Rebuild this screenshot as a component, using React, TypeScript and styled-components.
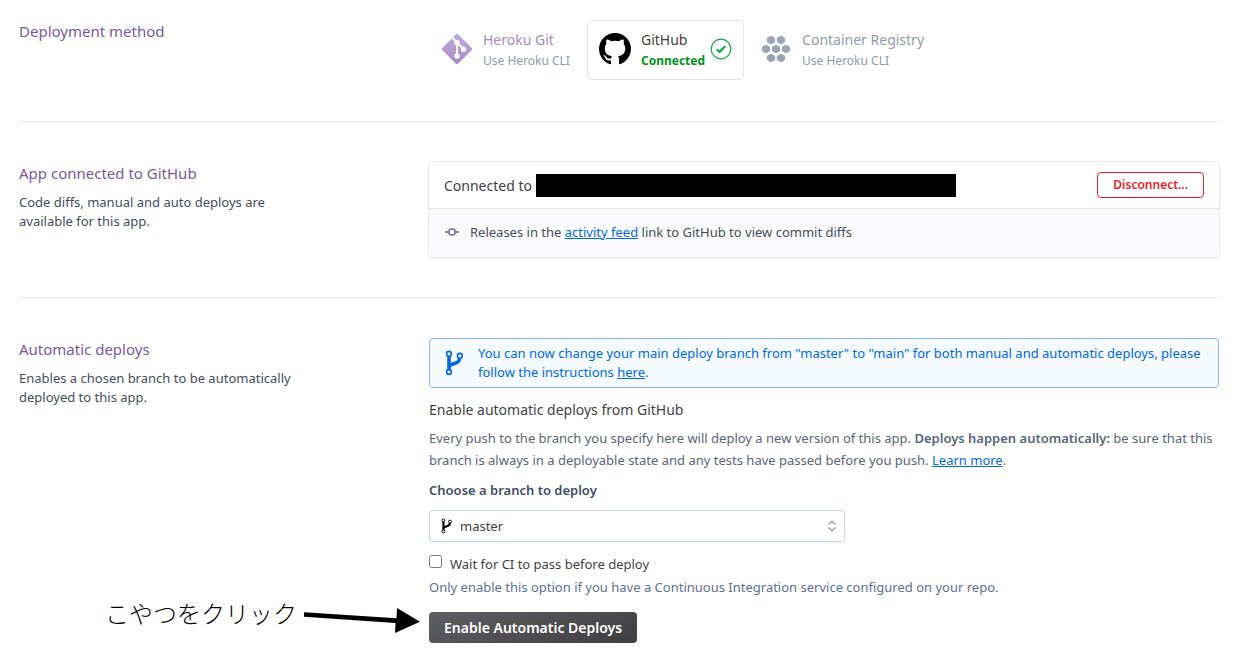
import React from "react";
import styled, { createGlobalStyle, css } from "styled-components";

const GlobalStyle = createGlobalStyle`
  *, *::before, *::after { box-sizing: border-box; }
  body {
    margin: 0;
    background: #fff;
    color: #3f3f44;
    font-family: "Noto Sans", "Noto Sans CJK JP", sans-serif;
    font-size: 13px;
    line-height: 19px;
  }
  h2, h3, p { margin: 0; font-weight: 400; }
  strong { font-weight: 600; }
  svg { flex: none; }
  button, select, input { font: inherit; margin: 0; }
`;

const Page = styled.main`
  padding: 0 15px 0 19px;
`;

const Section = styled.section<{ $first?: boolean; $last?: boolean }>`
  display: grid;
  grid-template-columns: 280px minmax(0, 1fr);
  column-gap: 130px;
  padding: ${(p) => (p.$first ? "20px" : "40px")} 0 ${(p) => (p.$first ? "41px" : p.$last ? "20px" : "40px")};
  border-bottom: ${(p) => (p.$last ? "0" : "1px solid #e3e4e9")};
`;

const SectionTitle = styled.h2`
  color: #79589f;
  font-size: 15px;
  line-height: 22px;
`;

const SectionText = styled.p`
  margin-top: 9px;
  color: #3f4d63;
`;

const Methods = styled.div`
  display: flex;
`;

const Method = styled.a<{ $active?: boolean }>`
  display: flex;
  align-items: center;
  height: 60px;
  padding: 0 11px 2px;
  border: 1px solid ${(p) => (p.$active ? "#e3e4e9" : "transparent")};
  border-radius: 4px;
  text-decoration: none;
`;

const MethodLabel = styled.span`
  display: flex;
  flex-direction: column;
  margin: 2px 5px 0 10px;
`;

const MethodName = styled.span<{ $color: string }>`
  color: ${(p) => p.$color};
  font-size: 14px;
  line-height: 21px;
`;

const MethodNote = styled.span<{ $connected?: boolean }>`
  color: ${(p) => (p.$connected ? "#00911f" : "#8d9bb0")};
  font-size: 12px;
  font-weight: ${(p) => (p.$connected ? 700 : 400)};
  line-height: 21px;
`;

const Panel = styled.div`
  align-self: start;
  border-radius: 4px;
  box-shadow: 0 0 0 1px #e6e8ed, 0 1px 2px #e3e5ea;
  overflow: hidden;
`;

const PanelRow = styled.div`
  display: flex;
  align-items: center;
  justify-content: space-between;
  height: 46px;
  padding: 0 15px;
  font-size: 14px;
`;

const Repo = styled.span`
  display: flex;
  align-items: center;
  gap: 4px;
`;

const Redacted = styled.span`
  width: 420px;
  height: 23px;
  background: #000;
`;

const PanelFooter = styled.div`
  display: flex;
  align-items: center;
  gap: 10px;
  height: 49px;
  padding: 0 15px 2px;
  border-top: 1px solid #e0e2ee;
  background: #fbfbfd;
  color: #3f4d63;
`;

const Link = styled.a<{ $inherit?: boolean }>`
  color: ${(p) => (p.$inherit ? "inherit" : "#0069e0")};
  text-decoration: underline;
`;

const buttonBase = css`
  border-radius: 4px;
  font-weight: 600;
  cursor: pointer;
`;

const DangerButton = styled.button`
  ${buttonBase}
  height: 26px;
  padding: 0 15px;
  border: 1px solid #eb1c26;
  background: #fff;
  color: #eb1c26;
  font-size: 12px;
  line-height: 20px;
`;

const PrimaryButton = styled.button`
  ${buttonBase}
  height: 31px;
  padding: 0 15px;
  border: 0;
  background: linear-gradient(160deg, #5f5e64, #3f3e43);
  color: #fff;
  font-size: 14px;
  line-height: 20px;
`;

const Notice = styled.div`
  display: flex;
  align-items: center;
  gap: 15px;
  padding: 5px 15px;
  border: 1px solid #84b6f0;
  border-radius: 4px;
  background: #f5faff;
  color: #0069e0;
`;

const Form = styled.form`
  display: flex;
  flex-direction: column;
  align-items: flex-start;
`;

const FormTitle = styled.h3`
  margin-top: 12px;
  font-size: 14px;
  line-height: 20px;
`;

const FormText = styled.p`
  margin-top: 7px;
  color: #56657d;
  line-height: 22px;
`;

const FieldLabel = styled.label`
  margin-top: 9px;
  color: #3f4d63;
  font-weight: 600;
  line-height: 20px;
`;

const SelectBox = styled.div`
  display: grid;
  align-items: center;
  width: 416px;
  max-width: 100%;
  margin-top: 10px;

  > * { grid-area: 1 / 1; }
  > svg { pointer-events: none; margin: 0 8px 0 12px; }
  > svg:last-child { justify-self: end; }
`;

const Select = styled.select`
  width: 100%;
  height: 32px;
  padding: 0 30px;
  border: 1px solid #c9d4e6;
  border-radius: 4px;
  background: #fff;
  box-shadow: 0 1px 2px #eef1f6;
  color: #3f3f44;
  appearance: none;
`;

const CheckLabel = styled.label`
  display: flex;
  align-items: flex-start;
  gap: 8px;
  margin-top: 12px;
  line-height: 20px;

  input { width: 13px; height: 13px; margin-top: 1px; }
`;

const Hint = styled.p`
  margin-top: 3px;
  color: #5b7193;
  line-height: 20px;
`;

const Actions = styled.div`
  position: relative;
  display: flex;
  margin-top: 15px;
`;

const Callout = styled.div`
  position: absolute;
  top: -20px;
  right: 100%;
  display: flex;
  align-items: center;
  gap: 6px;
  padding-right: 9px;
  color: #000;
  font-family: "Noto Sans CJK JP", sans-serif;
  font-size: 24px;
  font-weight: 300;
  line-height: 32px;
  white-space: nowrap;
`;

const GitLogo = () => (
  <svg width="32" height="32" viewBox="0 0 32 32" aria-hidden="true">
    <defs>
      <linearGradient id="git" x1="0" y1="0" x2="1" y2="1">
        <stop offset="0" stopColor="#c3a8dc" />
        <stop offset="1" stopColor="#a98cc4" />
      </linearGradient>
    </defs>
    <rect x="4.8" y="4.8" width="22.4" height="22.4" rx="1.5" transform="rotate(45 16 16)" fill="url(#git)" />
    <g stroke="#fff" strokeWidth="2" fill="none">
      <path d="M10 3.5 16 9.5V23M16 9.5l6.5 6.5" />
    </g>
    <g fill="#fff">
      <circle cx="16" cy="9.8" r="2.7" />
      <circle cx="22.5" cy="16.2" r="2.7" />
      <circle cx="16" cy="23" r="2.7" />
    </g>
  </svg>
);

const GitHubLogo = () => (
  <svg width="32" height="32" viewBox="0 0 16 16" aria-hidden="true">
    <path
      fill="#000"
      d="M8 0C3.58 0 0 3.58 0 8c0 3.54 2.29 6.53 5.47 7.59.4.07.55-.17.55-.38 0-.19-.01-.82-.01-1.49-2.01.37-2.53-.49-2.69-.94-.09-.23-.48-.94-.82-1.13-.28-.15-.68-.52-.01-.53.63-.01 1.08.58 1.23.82.72 1.21 1.87.87 2.33.66.07-.52.28-.87.51-1.07-1.78-.2-3.64-.89-3.64-3.95 0-.87.31-1.59.82-2.15-.08-.2-.36-1.02.08-2.12 0 0 .67-.21 2.2.82.64-.18 1.32-.27 2-.27.68 0 1.36.09 2 .27 1.53-1.04 2.2-.82 2.2-.82.44 1.1.16 1.92.08 2.12.51.56.82 1.27.82 2.15 0 3.07-1.87 3.75-3.65 3.95.29.25.54.73.54 1.48 0 1.07-.01 1.93-.01 2.2 0 .21.15.46.55.38A8.013 8.013 0 0 0 16 8c0-4.42-3.58-8-8-8z"
    />
  </svg>
);

const CheckCircle = () => (
  <svg width="22" height="22" viewBox="0 0 22 22" fill="none" stroke="#00a83c" aria-hidden="true">
    <circle cx="11" cy="11" r="9.8" strokeWidth="1.2" />
    <path d="M6.8 11.3 9.6 14l5.6-5.8" strokeWidth="2" />
  </svg>
);

const hexagons = [[10, 5], [20, 5], [5, 14], [15, 14], [25, 14], [10, 23], [20, 23]];

const RegistryIcon = () => (
  <svg width="36" height="28" viewBox="-5 0 36 28" fill="#9aa5b8" aria-hidden="true">
    {hexagons.map(([x, y]) => (
      <path
        key={`${x}-${y}`}
        d={`M${x} ${y - 3.8}l3.6 1.8v4l-3.6 1.8-3.6-1.8v-4z`}
        stroke="#9aa5b8"
        strokeWidth="1"
        strokeLinejoin="round"
      />
    ))}
  </svg>
);

const CommitIcon = () => (
  <svg width="16" height="10" viewBox="0 0 16 10" fill="none" stroke="#75859f" strokeWidth="1.8" aria-hidden="true">
    <circle cx="8" cy="5" r="3.2" />
    <path d="M1 5h3.8M11.2 5H15" />
  </svg>
);

const BranchIcon = ({ width, height, color }: { width: number; height: number; color: string }) => (
  <svg width={width} height={height} viewBox="0 0 18 26" fill="none" stroke={color} aria-hidden="true">
    <path d="M4 5.8v14" strokeWidth="3.6" />
    <path d="M14.6 8c0 7.5-9.6 4-10.6 9" strokeWidth="3.6" />
    <g strokeWidth="1.6">
      <circle cx="4" cy="3.8" r="2.4" />
      <circle cx="4" cy="22" r="2.4" />
      <circle cx="14.8" cy="5.8" r="2.4" />
    </g>
  </svg>
);

const SortIcon = () => (
  <svg width="10" height="12" viewBox="0 0 10 12" fill="none" stroke="#97a3b8" strokeWidth="1.5" aria-hidden="true">
    <path d="M1.5 4.5 5 1.3l3.5 3.2M1.5 7.5 5 10.7l3.5-3.2" />
  </svg>
);

const Arrow = () => (
  <svg width="117" height="42" viewBox="0 0 117 42" aria-hidden="true">
    <path d="M1 20.3 93.500 26.3 94 16l23 13.700L92 41l.5-10L1 24.800z" fill="#000" />
  </svg>
);

export default function App() {
  return (
    <>
      <GlobalStyle />
      <Page>
        <Section $first>
          <SectionTitle>Deployment method</SectionTitle>
          <Methods>
            <Method href="#git">
              <GitLogo />
              <MethodLabel>
                <MethodName $color="#a887c4">Heroku Git</MethodName>
                <MethodNote>Use Heroku CLI</MethodNote>
              </MethodLabel>
            </Method>
            <Method href="#github" $active>
              <GitHubLogo />
              <MethodLabel>
                <MethodName $color="#3f3f44">GitHub</MethodName>
                <MethodNote $connected>Connected</MethodNote>
              </MethodLabel>
              <CheckCircle />
            </Method>
            <Method href="#registry">
              <RegistryIcon />
              <MethodLabel>
                <MethodName $color="#8d9bb0">Container Registry</MethodName>
                <MethodNote>Use Heroku CLI</MethodNote>
              </MethodLabel>
            </Method>
          </Methods>
        </Section>

        <Section>
          <div>
            <SectionTitle>App connected to GitHub</SectionTitle>
            <SectionText>Code diffs, manual and auto deploys are available for this app.</SectionText>
          </div>
          <Panel>
            <PanelRow>
              <Repo>
                Connected to <Redacted />
              </Repo>
              <DangerButton type="button">Disconnect...</DangerButton>
            </PanelRow>
            <PanelFooter>
              <CommitIcon />
              <span>
                Releases in the <Link href="#activity">activity feed</Link> link to GitHub to view commit diffs
              </span>
            </PanelFooter>
          </Panel>
        </Section>

        <Section $last>
          <div>
            <SectionTitle>Automatic deploys</SectionTitle>
            <SectionText>Enables a chosen branch to be automatically deployed to this app.</SectionText>
          </div>
          <div>
            <Notice>
              <BranchIcon width={18} height={26} color="#0069e0" />
              <p>
                You can now change your main deploy branch from "master" to "main" for both manual and automatic
                deploys, please follow the instructions{" "}
                <Link href="#instructions" $inherit>
                  here
                </Link>
                .
              </p>
            </Notice>
            <Form onSubmit={(e) => e.preventDefault()}>
              <FormTitle>Enable automatic deploys from GitHub</FormTitle>
              <FormText>
                Every push to the branch you specify here will deploy a new version of this app.{" "}
                <strong>Deploys happen automatically:</strong> be sure that this branch is always in a deployable
                state and any tests have passed before you push. <Link href="#learn">Learn more</Link>.
              </FormText>
              <FieldLabel htmlFor="branch">Choose a branch to deploy</FieldLabel>
              <SelectBox>
                <Select id="branch" defaultValue="master">
                  <option>master</option>
                </Select>
                <BranchIcon width={11} height={16} color="#000" />
                <SortIcon />
              </SelectBox>
              <CheckLabel>
                <input type="checkbox" />
                Wait for CI to pass before deploy
              </CheckLabel>
              <Hint>Only enable this option if you have a Continuous Integration service configured on your repo.</Hint>
              <Actions>
                <Callout>
                  こやつをクリック
                  <Arrow />
                </Callout>
                <PrimaryButton type="submit">Enable Automatic Deploys</PrimaryButton>
              </Actions>
            </Form>
          </div>
        </Section>
      </Page>
    </>
  );
}
